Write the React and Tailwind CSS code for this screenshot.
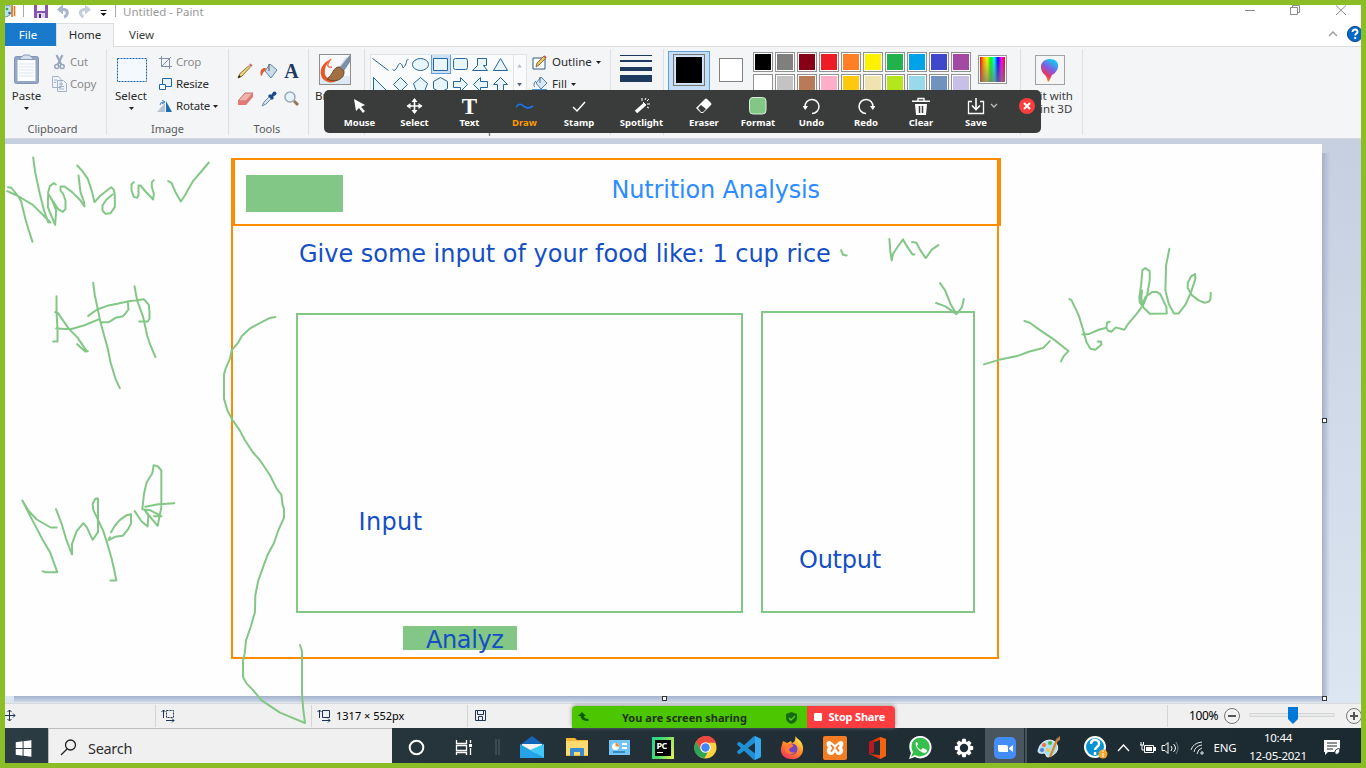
import React from "react";

const Svg = ({ w, h, className = "", children, vb }) => (
  <svg width={w} height={h} viewBox={vb || `0 0 ${w} ${h}`} className={"block shrink-0 " + className} fill="none">{children}</svg>
);

const Down = ({ className = "" }) => (
  <Svg w={5} h={3} className={className}><path d="M0 0h5L2.500 3z" fill="#222" /></Svg>
);

const Group = ({ className, label, labelClass = "", children }) => (
  <div className={"relative flex shrink-0 flex-col border-r border-[#dcdfe3] " + className}>
    <div className="flex h-[74px] w-full">{children}</div>
    {label && <div className={"text-center text-[11px] leading-[13px] text-[#5a5a5a] " + labelClass}>{label}</div>}
  </div>
);

const Row = ({ icon, children, dim }) => (
  <div className={"flex h-[22px] items-center gap-[3px] text-[11.5px] tracking-[-0.2px] whitespace-nowrap " + (dim ? "text-[#8b8b8b]" : "text-[#2b2b2b]")}>
    <div className="flex w-[16px] justify-center">{icon}</div>
    {children}
  </div>
);

function TitleBar() {
  return (
    <div className="flex h-[18px] shrink-0 bg-white text-[12px] text-[#999]">
      <Svg w={112} h={18} vb="5 5 112 18">
        <path d="M4 7c4-4 10 0 8 4-1 4-4 6-8 6z" fill="#b9e2ef" stroke="#6196ad" />
        <circle cx="7" cy="9" r="1.3" fill="#3aa34a" /><circle cx="9.500" cy="13" r="1.300" fill="#2d6bc1" />
        <path d="M12 5v12M14.500 6v10" stroke="#df7c26" strokeWidth="1.700" />
        <path d="M23.500 5v12M115.500 5v12" stroke="#a9a9a9" />
        <path d="M34 5h14v13H34z" fill="#8657ad" /><path d="M37 5h8v6h-8z" fill="#f7f4fa" /><path d="M37 13h8v5h-8z" fill="#dcd6e6" /><path d="M39 14h2v4h-2z" fill="#4c2a7a" />
        <path d="M61 9.500h3.500c4 1 3.500 6-.5 7.500" stroke="#a7b5ce" strokeWidth="3" /><path d="M57 9.500l6-5v10z" fill="#a7b5ce" />
        <path d="M86 9.500h-2c-5 1-4.500 5-.5 7.500" stroke="#c3cddd" strokeWidth="3" /><path d="M91 9.500l-6-5v10z" fill="#c3cddd" />
        <path d="M100.500 10.500h6" stroke="#111" /><path d="M100.500 13h6l-3 3z" fill="#111" />
      </Svg>
      <div className="ml-[6px] mt-[-1px] text-[11.5px] leading-[16px]">Untitled - Paint</div>
      <Svg w={120} h={18} vb="1241 5 120 18" className="ml-auto">
        <path d="M1245 10.500h10M1290.500 7.500h7v7h-7zM1292.500 7v-1.500h7v7h-1.500M1336 5.500l10 9.500M1346 5.500l-10 9.500" stroke="#8c8c8c" />
      </Svg>
    </div>
  );
}

function Tabs() {
  return (
    <div className="flex h-[24px] shrink-0 bg-white text-[11.5px] leading-[24px]">
      <div className="h-[23px] w-[51px] bg-[#1979ca] text-center text-white pr-[5px]">File</div>
      <div className="w-[58px] border-x border-t border-[#dcdddf] bg-[#f4f5f7] text-center text-[#2b2b2b] leading-[22px]">Home</div>
      <div className="flex grow border-b border-[#dadbdc] pl-[15px] text-[#3b3b3b]">
        View
        <Svg w={38} h={24} vb="1323 23 38 24" className="ml-auto">
          <path d="M1329 36l4-4 4 4" stroke="#999" strokeWidth="1.300" />
          <circle cx="1355" cy="34" r="7.600" fill="#0768c4" stroke="#0b4b8c" />
          <path d="M1352.500 32c0-3.500 5.500-3 5 0-.2 1.500-2.300 1.500-2.300 3.500M1355.200 37v2" stroke="#fff" strokeWidth="1.900" />
        </Svg>
      </div>
    </div>
  );
}

const shapes = [
  "M-8-6L8 6", "M-8 5C-4 9-3-2 0-1S1 6 4 2 5-5 8-5", "E", "M-7-6h14v12h-14z", "M-5-6h10q2 0 2 2v7q0 2-2 2h-10q-2 0-2-2v-7q0-2 2-2z", "M-3-6h9v7h-3l4 5h-15l5-5z", "M0-6l7 12h-14z",
  "M-7-7v14h14z", "M0-7l7 7-7 7-7-7z", "M0-7l7 6-3 8h-8l-3-8z", "M0-7l7 4v7l-7 4-7-4v-7z", "M-7-3h7v-4l7 7-7 7v-4h-7z", "M7-3h-7v-4l-7 7 7 7v-4h7z", "M0-7l7 7h-4v8h-6v-8h-4z",
];
const palette = [
  ["#000000", "#ffffff"], ["#7f7f7f", "#c3c3c3"], ["#880015", "#b97a57"], ["#ed1c24", "#ffaec9"], ["#ff7f27", "#ffc90e"],
  ["#fff200", "#efe4b0"], ["#22b14c", "#b5e61d"], ["#00a2e8", "#99d9ea"], ["#3f48cc", "#7092be"], ["#a349a4", "#c8bfe7"],
];

function Ribbon() {
  return (
    <div className="flex h-[92px] shrink-0 border-b border-[#d5d8dc] bg-[#f4f5f7] pt-[2px] pb-[3px]">
      <Group className="w-[102px]" label="Clipboard" labelClass="pr-[6px]">
        <div className="flex w-[43px] flex-col items-center pt-[5px] text-[11.5px] leading-[16px] text-[#2b2b2b]">
          <Svg w={26} h={31} className="ml-px">
            <rect x=".5" y="2.500" width="24" height="27" rx="2" fill="#93a6c6" stroke="#8496b5" />
            <rect x="3.500" y="6" width="18" height="21" fill="#fcfdff" />
            <path d="M5 10h15M5 13h15M5 16h15M5 19h15M5 22h15" stroke="#dce4f0" />
            <path d="M5.500 5.500c1-3 3-2 4-4.500h6c1 2.500 3 1.500 4 4.500z" fill="#d6dfec" stroke="#8798b4" />
          </Svg>
          <div className="mt-[3px] leading-[15px]">Paste</div>
          <Down className="mt-[4px]" />
        </div>
        <div className="flex flex-col pl-[3px] pt-[2px]">
          <Row dim icon={<Svg w={11} h={16}><path d="M2.500 1l5 10M8.500 1l-5 10" stroke="#93a5bf" strokeWidth="2" /><circle cx="2.800" cy="12.500" r="2" stroke="#93a5bf" strokeWidth="1.500" /><circle cx="8.200" cy="12.500" r="2" stroke="#93a5bf" strokeWidth="1.500" /></Svg>}>Cut</Row>
          <Row dim icon={<Svg w={15} h={16}><path d="M.5.500h6l2.500 3v8H.5zM5.500 4.500h6l3 3v8h-9z" fill="#f2f5fb" stroke="#a1b0cb" /><path d="M2 4h3M2 6.500h2M7 8h4M7 10.500h5M7 13h5" stroke="#a1b0cb" /></Svg>}>Copy</Row>
        </div>
      </Group>
      <Group className="w-[122px]" label="Image">
        <div className="flex w-[48px] flex-col items-center pt-[9px] text-[11.5px] leading-[16px] text-[#2b2b2b]">
          <Svg w={30} h={25} className="ml-[2px]"><rect x=".5" y=".5" width="29" height="23" fill="#f4f9fe" stroke="#1664aa" strokeDasharray="2 1" /></Svg>
          <div className="mt-[5px] leading-[15px]">Select</div>
          <Down className="mt-[4px]" />
        </div>
        <div className="flex flex-col pl-[2px] pt-[2px]">
          <Row dim icon={<Svg w={13} h={13}><path d="M2.500 0v10.500H13M0 2.500h10.500V13M2.500 10.500L12 1" stroke="#8092ac" /></Svg>}>Crop</Row>
          <Row icon={<Svg w={13} h={13}><path d="M3.500.5h9v8h-9z" fill="#e9f5fc" stroke="#1c68a8" /><path d="M.5 6.500h6v5h-6z" fill="#fff" stroke="#1c68a8" /></Svg>}>Resize</Row>
          <Row icon={<Svg w={16} h={13}><path d="M8 12H0L8 3z" fill="#b6c3d2" /><path d="M9 12h6L9 1z" fill="#1f6fae" /><path d="M3 5q0-3 4-3M5 0l3 2-3 2" stroke="#2d7fd1" /></Svg>}>Rotate <Down /></Row>
        </div>
      </Group>
      <Group className="w-[80px]" label="Tools" labelClass="pr-[3px]">
        <div className="grid h-[56px] grid-cols-[24px_23px_23px] grid-rows-[28px_28px] place-items-center pl-[4px] mt-[8px]">
          <Svg w={16} h={16}><path d="M1 15l2-4.500 8.500-7.500 1.500 1.500L5 13z" fill="#f4d46a" stroke="#8b7243" /><path d="M12 2l1.500-1.500 2 2L14 4z" fill="#d75d5d" /><path d="M1 15l1-3 2 2z" fill="#222" /></Svg>
          <Svg w={18} h={16}><path d="M5 8l5-7 7 6-6 8z" fill="#c9dcec" stroke="#5e87aa" /><path d="M9 1v7" stroke="#555" /><path d="M6 5C0 4 0 10 1 13c2 0 1-4 4-5z" fill="#e5572c" /></Svg>
          <div className="font-['Liberation_Serif',serif] text-[20px] font-bold leading-[18px] text-[#203a60]">A</div>
          <Svg w={17} h={14}><path d="M1 9l7-8h8l-7 8z" fill="#f2b2ae" stroke="#cd6d69" /><path d="M1 9h8v4H1z" fill="#e77772" /><path d="M9 9l7-8v4l-7 8z" fill="#dc7a76" /></Svg>
          <Svg w={16} h={16}><path d="M1 15l2-4 6-6 2 2-6 6z" fill="#d6e7f4" stroke="#6b87a3" /><path d="M8 4l4 4M10 6l3-3" stroke="#1a4b8b" strokeWidth="3" /><circle cx="13.500" cy="2.500" r="2" fill="#1a4b8b" /></Svg>
          <Svg w={16} h={16}><circle cx="6" cy="6" r="5" fill="#e6f3fd" stroke="#9aa9b8" strokeWidth="1.500" /><path d="M10 10l4 4" stroke="#9a7659" strokeWidth="3" /></Svg>
        </div>
      </Group>
      <Group className="w-[56px]">
        <div className="pl-[6px] pt-[5px] text-[11.5px] leading-[16px] text-[#2b2b2b]">
          <Svg w={35} h={32} className="ml-[4px]"><rect x=".5" y=".5" width="31" height="30" fill="#f7fafc" stroke="#8e8e8e" /><path d="M1 22h30v8H1z" fill="#dceaf4" /><path d="M13 5C2 8-1 19 4 25c5 5 12 4 16 0-6 2-13 0-14-5C5 14 8 8 13 5z" fill="#ea5724" /><path d="M12 5c-4 5-5 9 1 8" stroke="#ef7048" strokeWidth="1.500" /><path d="M31 1L20 13l5 4 6-9z" fill="#7c8ea8" /><path d="M28 3l-7 9" stroke="#d7e0e9" strokeWidth="1.500" /><path d="M20 13c-6 0-6 8-12 12 7 4 18 1 17-8z" fill="#a06f42" stroke="#704c2b" /></Svg>
          <div className="mt-[2px] leading-[15px]">Brushes</div>
        </div>
      </Group>
      <Group className="w-[246px]" label="Shapes">
        <div className="ml-[5px] mt-[5px] flex h-[61px] w-[157px] border border-[#dfe2e6] bg-[#fafbfc]">
          <Svg w={142} h={59} vb="371 55 142 59">
            <rect x="431.500" y="54.500" width="19" height="19" fill="#cce2f8" stroke="#5da0e0" />
            {shapes.map((d, i) => (
              <g key={i} transform={`translate(${380.5 + (i % 7) * 20} ${64.500 + Math.floor(i / 7) * 20})`} stroke="#27659c" fill={i === 0 || i === 1 ? "none" : "#e8f5fb"}>
                {d === "E" ? <ellipse rx="8" ry="6" /> : <path d={d} />}
              </g>
            ))}
          </Svg>
          <Svg w={13} h={59} className="border-l border-[#e1e4e8]"><path d="M3.500 11h5L6 7.500z" fill="#b6bdc8" /><path d="M3.500 28h5L6 31.500z" fill="#4b5d77" /></Svg>
        </div>
        <div className="flex flex-col pl-[5px] pt-[2px]">
          <Row icon={<Svg w={16} h={15}><path d="M1 3h12v11H1z" fill="#fff" stroke="#315983" /><path d="M4 12l1-4 7-7 2 2-7 7z" fill="#edc65c" stroke="#8c6c3f" /><path d="M12 1l2 2" stroke="#d15757" strokeWidth="2" /></Svg>}><span className="ml-px tracking-normal">Outline</span> <Down className="ml-[1px]" /></Row>
          <Row icon={<Svg w={17} h={16}><path d="M4 7l5-6 6 6-6 6z" fill="#d7e7f3" stroke="#557f9f" /><path d="M8 1v6M4 5C1 7 2 11 3 11" stroke="#4a7191" /><path d="M0 13h15v3H0z" fill="#4b95dc" /></Svg>}><span className="ml-px tracking-normal">Fill</span> <Down className="ml-[1px]" /></Row>
        </div>
      </Group>
      <Group className="w-[53px]">
        <div className="flex w-[32px] flex-col ml-[9px] pt-[6px]">
          <div className="h-px bg-[#1f3a5f]" /><div className="mt-[4px] h-[2px] bg-[#1f3a5f]" />
          <div className="mt-[5px] h-[4px] bg-[#1f3a5f]" /><div className="mt-[4px] h-[7px] bg-[#1f3a5f]" />
        </div>
      </Group>
      <Group className="w-[357px]">
        <div className="ml-[4px] mt-[2px] h-[66px] w-[42px] border border-[#5da0e0] bg-[#c5def6] pl-[4px] pt-[2px]">
          <div className="h-[32px] w-[32px] border border-[#787878] p-px"><div className="h-full w-full border border-[#d7e7f7] bg-black" /></div>
        </div>
        <div className="ml-[9px] mt-[9px] h-[24px] w-[24px] border border-[#828282] bg-white" />
        <div className="ml-[10px] mt-[3px] flex gap-[2px]">
          {palette.map((c, i) => (
            <div key={i} className="flex flex-col gap-[2px]">
              {c.map((v) => <div key={v} className="h-[20px] w-[20px] border border-[#929292] bg-white p-px"><div className="h-full w-full" style={{ backgroundColor: v }} /></div>)}
            </div>
          ))}
        </div>
        <div className="ml-[7px] mt-[6px] h-[29px] w-[29px] border border-[#969696] bg-white p-px">
          <div className="h-full w-full bg-[linear-gradient(to_bottom,transparent,#777b),linear-gradient(to_right,red,orange,yellow,lime,cyan,blue,magenta,red)]" />
        </div>
      </Group>
      <Group className="w-[62px]">
        <div className="flex w-full flex-col items-center pr-[4px] pt-[6px] text-center text-[11.5px] leading-[13px] text-[#3b3b3b] whitespace-nowrap">
          <div className="flex h-[30px] w-[30px] items-center justify-center border border-[#a1a1a1] bg-[#f5f5f5]">
            <Svg w={20} h={25}>
              <defs><linearGradient id="p3" x1=".8" y1="0" x2=".3" y2="1"><stop stopColor="#00e0f0" /><stop offset=".45" stopColor="#805ee5" /><stop offset=".75" stopColor="#e23666" /><stop offset="1" stopColor="#ffb700" /></linearGradient></defs>
              <path d="M10 1C-1 1-1 13 5 17c2 2 2 5 3 7 2-1 2-4 4-7C21 12 20 1 10 1z" fill="url(#p3)" />
            </Svg>
          </div>
          <div className="mt-[4px]">Edit with</div><div>Paint 3D</div>
        </div>
      </Group>
    </div>
  );
}

const ink = [
  ["translate(.5 145.5)", "M22 125L32 126L55 155L62 168L75 222L85 255L96 289M20 137L50 150L97 178L150 231M98 36L104 80L118 145L132 200L143 230L150 231M166 117L160 113L148 122L143 140L142 185L164 238L167 195L155 165L145 148L172 190L187 199L195 190L195 165L188 145L180 135L180 123L192 123L215 140L240 165L252 183L250 168L240 140L234 90M230 60L245 76L262 100L275 140L282 170L300 150L332 125L340 133L343 150L343 185L330 203L315 205L306 195L306 180L318 162L336 147M400 110L393 116L393 135L400 154L410 157L414 150L414 120L420 120L435 138L458 162L460 145L454 125L454 110L460 104M503 107L513 112L525 140L541 168L553 150L578 106L605 75L625 51"],
  ["translate(.5 145.5)", "M168 452L168 500L171 550L171 588L158 588M164 500L172 502L205 550L230 575L258 616M230 596L254 618L262 617M167 549L210 551L250 540L298 520M278 412L283 450L300 530L322 610L330 650L345 700L358 728M263 511L290 492L320 481L350 475L385 467L430 461L445 478L447 500L447 520L442 528L416 528M382 470L384 492L368 512L345 517L325 530L302 530M402 422L410 465L428 515L440 570L450 600L465 635"],
  ["translate(210 300.3)", "M196 50L180 53L158 64L135 76L118 86L95 108L85 126L65 150L60 175L47 205L42 222L42 295L52 330L66 357L88 388L105 420L128 455L150 480L180 525L200 565L214 583L218 615L222 625L222 652L205 690L192 728L172 765L145 840L136 885L135 935L122 980L108 1020L104 1060L99 1082L99 1130L110 1150L128 1168L155 1200L210 1237L285 1268L280 1230L276 1180L276 1052L270 1034"],
  ["translate(0 440.5)", "M67 180L95 235L128 298L150 335L172 395L135 395L128 392M67 180L85 210L110 237L152 261L170 261M168 206L185 250L198 295L216 342L216 310L230 272L250 248L260 260L278 298L294 275L294 174L286 175L278 190L280 208L310 272L325 320L335 355L343 390L349 420L331 420M330 290L326 299L345 289L368 286L385 265L393 250L393 221L380 224L360 238L345 255L333 275M404 212L425 243L443 258L445 225L435 210L473 256L484 200L484 90L474 78L461 74L457 98L440 125L432 160L427 206L450 209L484 227L462 227M436 199L475 191L523 188"],
  ["translate(820.4 225.4)", "M62 74L68 88L79 90M207 41L210 80L214 105L218 85L230 67L248 42L258 60L276 87L282 87M275 50L288 52L300 75L316 98L335 72L354 59M359 173L374 195L390 235L408 266M347 233L375 243L408 266L425 245L430 221M491 417L540 402L590 392L625 379L668 368L688 347M612 287L628 292L660 315L700 342L744 377L730 392L722 408"],
  ["translate(820.4 225.4)", "M747 221L753 224L775 270L790 320L798 350L810 370L825 373L843 357L842 349L832 348M786 327L805 326L835 313L858 307M868 289L860 292L858 307L863 316L873 319L886 306L912 313L925 293L945 270L968 240L980 210L988 165L988 137L975 128L966 134L962 180L957 215L958 232L970 247L988 265L1039 264L1038 245L1020 207L1010 200L995 200L975 215L965 240L963 215L965 195M1047 70L1037 120L1035 195L1045 235L1060 264L1075 264L1095 238L1112 200L1125 160L1124 146L1113 152L1102 172L1102 188L1115 210L1135 225L1152 232L1165 229L1170 222L1171 202"],
];

const Note = ({ className, children }) => (
  <div className={"absolute whitespace-nowrap font-['DejaVu_Sans',sans-serif] text-[24px] leading-[30px] " + className}>{children}</div>
);

const Handle = ({ className }) => <div className={"absolute h-[5px] w-[5px] border border-[#333] bg-white " + className} />;

function Workspace() {
  return (
    <div className="relative h-[564px] shrink-0 bg-linear-to-b from-[#c5cfdf] to-[#dce6f2] pt-[5px]">
      <div className="flex">
        <div className="relative h-[552px] w-[1317px] bg-[#fefefe]">
          <div className="absolute left-[226px] top-[14px] h-[501px] w-[768px] border-2 border-[#ff8c00]" />
          <div className="absolute left-[228px] top-[14px] h-[68px] w-[768px] border-2 border-[#ff8c00]" />
          <div className="absolute left-[241px] top-[31px] h-[37px] w-[97px] bg-[#83c786]" />
          <div className="absolute left-[291px] top-[169px] h-[300px] w-[447px] border-2 border-[#83c786]" />
          <div className="absolute left-[756px] top-[167px] h-[302px] w-[214px] border-2 border-[#83c786]" />
          <div className="absolute left-[398px] top-[482px] h-[24px] w-[114px] bg-[#83c786]" />
          <Note className="left-[606.500px] top-[31px] tracking-[-0.18px] text-[#2d8cff]">Nutrition Analysis</Note>
          <Note className="left-[294px] top-[95px] tracking-[-0.02px] text-[#144fc4]">Give some input of your food like: 1 cup rice</Note>
          <Note className="left-[353.500px] top-[363px] tracking-[0.35px] text-[#144fc4]">Input</Note>
          <Note className="left-[794px] top-[401px] tracking-[-0.25px] text-[#144fc4]">Output</Note>
          <Note className="left-[421px] top-[481px] tracking-[-0.4px] text-[#144fc4]">Analyz</Note>
        </div>
        <div className="mt-[9px] w-[8px] bg-linear-to-r from-[#a3b1ca] to-transparent" />
      </div>
      <div className="ml-[9px] h-[6px] w-[1308px] bg-linear-to-b from-[#a3b1ca] to-[#cdd7e6]" />
      <Handle className="left-[1317px] top-[279px]" />
      <Handle className="left-[657px] top-[557px]" />
      <Handle className="left-[1317px] top-[557px]" />
    </div>
  );
}

function StatusBar() {
  return (
    <div className="flex h-[25px] shrink-0 border-t border-[#d8dadd] bg-[#f0f0f0] py-px text-[11px] leading-[24px] text-black">
      <div className="w-[151px] border-r border-[#d4d4d4]"><Svg w={12} h={22}><path d="M-1 10.500h11M4.500 5v11M2.500 7l2-2 2 2M2.500 14l2 2 2-2M8 8.500l2 2-2 2" stroke="#1d3557" /></Svg></div>
      <div className="w-[156px] border-r border-[#d4d4d4] pl-[5px]"><Svg w={16} h={22}><path d="M2.500 5v8M.5 7l2-2 2 2M5 15.500h8M11 13.500l2 2-2 2" stroke="#1d3557" /><path d="M5.500 5.500h7v7h-7z" stroke="#1d3557" strokeDasharray="2 1" /></Svg></div>
      <div className="flex w-[156px] border-r border-[#d4d4d4] pl-[5px]"><Svg w={16} h={22}><path d="M2.500 5v8M.5 7l2-2 2 2M5 15.500h8M11 13.500l2 2-2 2M5.500 5.500h7v7h-7z" stroke="#1d3557" /></Svg><span className="ml-[3px] whitespace-nowrap leading-[22px]">1317 × 552px</span></div>
      <div className="w-[156px] border-r border-[#d4d4d4] pl-[7px]"><Svg w={12} h={22}><path d="M.5 5.500h10v10H.5zM2.500 5.500v4h6v-4M3.500 15.500v-4h4v4" stroke="#1d3557" /></Svg></div>
      <div className="w-[544px] border-r border-[#d4d4d4]" />
      <div className="flex grow items-center pl-[21px] pb-[1px]">
        <span className="w-[28px] whitespace-nowrap tracking-[-0.4px] text-[12px] leading-[22px]">100%</span>
        <Svg w={144} h={23} vb="1217 704 144 23">
          <path d="M1250 713.500h84v3h-84z" fill="#e7eaea" stroke="#d6d6d6" />
          <path d="M1288 707h10v12l-5 5-5-5z" fill="#0078d7" />
          <circle cx="1232" cy="716" r="7.500" fill="#f2f2f2" stroke="#777" /><path d="M1228 716h8" stroke="#555" strokeWidth="2" />
          <circle cx="1354" cy="716" r="7.500" fill="#f2f2f2" stroke="#777" /><path d="M1350 716h8M1354 712v8" stroke="#555" strokeWidth="2" />
        </Svg>
      </div>
    </div>
  );
}

const Cell = ({ children, className = "w-[43px]" }) => <div className={"flex h-full shrink-0 items-center justify-center pt-[4px] " + className}>{children}</div>;

function TaskBar() {
  return (
    <div className="flex h-[35px] shrink-0 bg-linear-to-r from-[#2c3c43] via-[#222f37] to-[#1b2930] text-white">
      <Cell><Svg w={44} h={30} vb="0 0 44 30" className="w-[43px]"><path d="M11 9l7-1v7h-7zM19 8l8-1v8h-8zM11 16h7v7l-7-1zM19 16h8v8l-8-1z" fill="#fff" /></Svg></Cell>
      <div className="flex w-[344px] shrink-0 items-center border-t border-l border-[#bdbdbd] bg-[#f0f0f0] text-[14.5px] text-[#303030]">
        <Svg w={17} h={17} className="ml-[11px] mt-[3px]"><circle cx="10.500" cy="6" r="5" stroke="#222" strokeWidth="1.300" /><path d="M7 10l-6 6" stroke="#222" strokeWidth="1.300" /></Svg>
        <span className="ml-[11px] mt-[5px] tracking-[-0.3px]">Search</span>
      </div>
      <Cell className="w-[48px]"><Svg w={17} h={17}><circle cx="8.500" cy="8.500" r="6.800" stroke="#fff" strokeWidth="2" /></Svg></Cell>
      <Cell className="w-[48px]"><Svg w={18} h={16}><path d="M1.500 0v3.500h10V0M1.500 15v-2.500h10V15M1.500 5.500h10v5h-10zM15.500 0v3M15.500 8v7" stroke="#fff" strokeWidth="1.300" /><path d="M14 4h3v3h-3z" fill="#fff" /></Svg></Cell>
      <Cell className="w-[18px]"><Svg w={5} h={17}><path d="M1 0v16M4 0v16" stroke="#52616a" /></Svg></Cell>
      <div className="ml-[3px] flex">
        <Cell className="w-[46px]"><Svg w={24} h={23}><path d="M0 9L12 0l12 9v13H0z" fill="#1267bb" /><path d="M2 8h20v6l-10 5-10-5z" fill="#f5f5f5" /><path d="M0 8l24 14H0z" fill="#27a2e6" /><path d="M24 8v14L10 14z" fill="#41c8fa" /></Svg></Cell>
        <Cell><Svg w={22} h={19}><path d="M0 0h9l2 2h11v16H0z" fill="#f5b82f" /><path d="M0 3h22v14H0z" fill="#ffda70" /><path d="M4 18v-7q0-1 1-1h12q1 0 1 1v7h-4v-4H8v4z" fill="#398bd2" /></Svg></Cell>
        <Cell><Svg w={21} h={16}><path d="M0 0h21v15H0z" fill="#73c5f7" /><circle cx="6.500" cy="6.500" r="3.500" fill="#fff" /><path d="M6.500 6.500V3a3.500 3.500 0 013.500 3.500z" fill="#f68b24" /><path d="M13 3h5v2h-5zM13 7h5v2h-5z" fill="#fff" /><path d="M4 12h12" stroke="#2373ad" strokeWidth="1.500" /></Svg></Cell>
        <Cell><div className="bg-[linear-gradient(110deg,#22d88f,#53d96b_45%,#eff350)] p-[3px]"><div className="h-[16px] w-[16px] bg-black pl-[2px] text-[9px] font-bold leading-[11px] tracking-[-0.5px]">PC<div className="mt-[1px] h-px w-[6px] bg-white" /></div></div></Cell>
        <Cell><Svg w={23} h={23} vb="0 0 24 24"><circle cx="12" cy="12" r="11.500" fill="#fdd23d" /><path d="M2 6C9-4 20-1 23 7H12L7 14z" fill="#e84b3d" /><path d="M2 6c-5 9 1 17 9 17l5-9-4-7-5 7z" fill="#31a354" /><path d="M2 6l5 8 5-7z" fill="#e84b3d" /><circle cx="12" cy="12" r="5.500" fill="#fff" /><circle cx="12" cy="12" r="4.400" fill="#4287f5" /></Svg></Cell>
        <Cell><Svg w={24} h={24}><path fill="#1f8fd6" d="M23.150 2.587L18.210.21a1.494 1.494 0 0 0-1.705.29l-9.460 8.630-4.120-3.128a.999.999 0 0 0-1.276.057L.327 7.261A1 1 0 0 0 .326 8.740L3.899 12 .326 15.260a1 1 0 0 0 .001 1.479L1.650 17.940a.999.999 0 0 0 1.276.057l4.120-3.128 9.460 8.630a1.492 1.492 0 0 0 1.704.29l4.942-2.377A1.500 1.500 0 0 0 24 20.060V3.939a1.500 1.500 0 0 0-.85-1.352zm-5.146 14.861L10.826 12l7.178-5.448v10.896z" /><path d="M18 .2l5.100 2.400q.9.500.9 1.400v16q0 .9-.9 1.400L18 23.800z" fill="#38a8ee" /></Svg></Cell>
        <Cell><Svg w={24} h={24}><defs><linearGradient id="fox" x1=".8" y1="0" x2=".2" y2="1"><stop stopColor="#fff34f" /><stop offset=".5" stopColor="#ff8b24" /><stop offset="1" stopColor="#f22c65" /></linearGradient></defs><path d="M15 0c2 3 7 4 8 11 1 8-5 13-12 12C4 23 0 18 1 12L3 5l4 2 4-2 1 2c3-1 4-4 3-7z" fill="url(#fox)" /><circle cx="12" cy="13" r="5.500" fill="#7445c2" /><path d="M5 9l6-1c1 0 4 2 1 3l-3 2c0 3 3 4 6 3-1 2-8 4-10-2z" fill="#ff7b34" /></Svg></Cell>
        <Cell><Svg w={24} h={24}><rect width="24" height="24" rx="2" fill="#f47d23" /><path d="M8.500 6C5 3 1.500 7 5 11.500c-3 3.500 0 8 3.500 7.500 2 0 2.500-2 3.500-3 1 1 1.500 3 3.500 3 3.500.5 6.500-4 3.500-7.500C22.500 7 19 3 15.500 6l-3.500 3z" fill="#fff" /><path d="M8 9l2.500 3L8 15.500M16 9l-2.500 3 2.500 3.500" stroke="#f47d23" strokeWidth="1.800" /></Svg></Cell>
        <Cell><Svg w={20} h={24}><path d="M1 6l11-5 6 2v17l-6 3L1 18l11 1V4L6 6v10l-5 2z" fill="#df3907" /><path d="M1 6l5-2v12l-5 2z" fill="#b81724" /><path d="M12 1l6 2v17l-6 3z" fill="#f26410" /></Svg></Cell>
        <Cell><Svg w={23} h={23}><path d="M0 23l2-6C-4 5 7-3 16 1c10 5 8 19-2 21-3 1-6 0-8-1z" fill="#fff" /><path d="M2 21l2-5C-1 6 8-1 16 3c8 5 5 16-3 17-3 1-5 0-7-1z" fill="#36bf4a" /><path d="M7 6c-2 4 4 11 9 11 2-1 2-2 2-3l-4-2-2 2c-2-1-3-2-4-4l1-2-1-2z" fill="#fff" /></Svg></Cell>
        <Cell><Svg w={20} h={20} vb="0 0 24 24"><path d="M10 1h4l1 4 3-2 3 3-2 3 4 1v4l-4 1 2 3-3 3-3-2-1 4h-4l-1-4-3 2-3-3 2-3-4-1v-4l4-1-2-3 3-3 3 2z" fill="#fff" /><circle cx="12" cy="12" r="5" fill="#1f2d35" /></Svg></Cell>
        <Cell className="w-[39px] bg-[#4a565e]"><Svg w={22} h={22}><rect width="22" height="22" rx="5" fill="#448df9" /><path d="M4 8h8q2 0 2 2v5H6q-2 0-2-2zM15 11l4-3v7l-4-3z" fill="#fff" /></Svg></Cell>
        <div className="ml-px w-[2px] bg-[#46525a]" />
        <Cell><Svg w={26} h={24}><path d="M3 12C5 5 15 1 20 7c5 7-2 13-8 14-3 0-1-4-4-4-6 1-7-1-5-5z" fill="#a9dff1" stroke="#e8f7fc" /><circle cx="8" cy="9" r="2" fill="#ef7140" /><circle cx="14" cy="7" r="2" fill="#55b346" /><circle cx="6" cy="14" r="2" fill="#4b80dc" /><circle cx="12" cy="14" r="2" fill="#f5c544" /><path d="M21 4l-7 17" stroke="#d98628" strokeWidth="2.200" /><path d="M20 3l4-3v4l-3 2z" fill="#b9794a" /></Svg></Cell>
      </div>
      <Cell className="ml-[13px] w-[26px]"><Svg w={24} h={24}><circle cx="11" cy="11" r="10" fill="#0793d2" stroke="#fff" strokeWidth="2" /><path d="M7 8c0-6 9-5 8 0 0 3-4 3-4 6M11 16v3" stroke="#fff" strokeWidth="2.500" /><circle cx="19" cy="18" r="4.500" fill="#f0a72c" /><path d="M19 17v4M19 14.500v1.500" stroke="#fff" /></Svg></Cell>
      <Cell className="ml-[1px] w-[26px]"><Svg w={13} h={8}><path d="M1 7l5.500-6L12 7" stroke="#fff" strokeWidth="1.400" /></Svg></Cell>
      <Cell className="w-[22px]"><Svg w={17} h={12}><path d="M5.500 3.500h9v7h-9zM1 3h4M2 0v3M4.500 0v3M3 3v5h2" stroke="#fff" /><path d="M7 5h6v4H7zM15 5h2v4h-2z" fill="#fff" /></Svg></Cell>
      <Cell className="ml-px w-[22px]"><Svg w={18} h={14}><path d="M1 4.500h3l3-3v11l-3-3H1zM10 5q2 2 0 5M12.500 3q4 4 0 8" stroke="#fff" /><path d="M15 1q4 6 0 12" stroke="#73818a" /></Svg></Cell>
      <Cell className="ml-[4px] w-[24px]"><Svg w={14} h={14}><path d="M1 9Q3 2 12 1M4 11Q5 5 12 4M7 13Q8 8 12 7M11 11h2v2h-2z" stroke="#e2e5e7" /></Svg></Cell>
      <Cell className="w-[32px]"><span className="text-[11.5px] tracking-[-0.2px]">ENG</span></Cell>
      <div className="ml-px flex w-[72px] flex-col items-center whitespace-nowrap pt-[1px] text-[11.500px] leading-[18px] tracking-[-0.25px]"><span>10:44</span><span>12-05-2021</span></div>
      <Cell className="w-[38px]"><Svg w={18} h={17}><path d="M0 1h16v12H4l-3 3v-3H0z" fill="#fff" /><path d="M3 4h10M3 7h10M3 10h6" stroke="#1b2930" /><path d="M11 15c-1-5 4-6 5-5-1 3 0 6-5 5z" fill="#fff" stroke="#1b2930" /></Svg></Cell>
    </div>
  );
}

const tools = [
  ["Mouse", "w-[55px]", <path d="M3 2l2 12 3-3 4 5 2-2-4-4 4-2z" fill="#fff" />],
  ["Select", "w-[55px]", <><path d="M8.500 2v14M1.500 9h14" stroke="#fff" strokeWidth="1.600" /><path d="M8.500 1l3 4h-6zM8.500 17l3-4h-6zM.5 9l4-3v6zM16.500 9l-4-3v6z" fill="#fff" /></>],
  ["Text", "w-[55px]", null],
  ["Draw", "w-[55px]", <path d="M0 10C4 5 6 8 9 10s5 1 8-1" stroke="#1677f2" strokeWidth="1.600" />],
  ["Stamp", "w-[54px]", <path d="M3 10l4 4 8-9" stroke="#fff" strokeWidth="1.500" />],
  ["Spotlight", "w-[71px]", <><path d="M3 15l9-8" stroke="#fff" strokeWidth="3.600" /><path d="M10 5l3 3M9 4V1M12 3l1-2M14 4l2-2M14 7h3M14 10l2 1" stroke="#fff" /></>],
  ["Eraser", "w-[54px]", <><path d="M1 11l9-9q1-1 2 0l4 4q1 1 0 2l-8 8H6z" fill="#fff" /><path d="M3 11l3-3 5 4-3 3H6z" fill="#3a3c3b" /></>],
  ["Format", "w-[54px]", <rect x=".5" y=".5" width="16.500" height="16.500" rx="3.500" fill="#83c786" stroke="#d9eeda" />],
  ["Undo", "w-[53px]", <><path d="M2 10a7 7 0 117 6.500" stroke="#fff" strokeWidth="1.500" /><path d="M-.5 9H5l-2.700 4z" fill="#fff" /></>],
  ["Redo", "w-[56px]", <><path d="M16 10a7 7 0 10-7 6.500" stroke="#fff" strokeWidth="1.500" /><path d="M13 9h5.500l-2.700 4z" fill="#fff" /></>],
  ["Clear", "w-[54px]", <><path d="M0 3.500h18v1.500H0zM3 7h12l-1 11H4z" fill="#fff" /><path d="M6 4V1.500h6V4" stroke="#fff" strokeWidth="1.400" /><path d="M7.500 9v7M10.500 9v7" stroke="#3a3c3b" strokeWidth="1.500" /></>],
  ["Save", "w-[56px]", <><path d="M5 4.500H1.500v12h15v-12H13" stroke="#fff" strokeWidth="1.300" /><path d="M9 1v11M5 8.500l4 4 4-4" stroke="#fff" strokeWidth="1.600" /></>],
];

function Annotator() {
  return (
    <div className="absolute left-[324px] top-[90px] flex h-[43px] w-[717px] rounded-[5px] bg-[#3a3c3b] pl-[8px]">
      {tools.map(([name, w, icon]) => (
        <div key={name} className={"flex shrink-0 flex-col items-center pt-[7px] text-[9.5px] font-bold leading-[13px] " + w + (name === "Draw" ? " text-[#ff9a00]" : " text-white")}>
          {icon ? <Svg w={18} h={19}>{icon}</Svg> : <div className="h-[19px] font-['Liberation_Serif',serif] text-[23px] leading-[19px]">T</div>}
          <span className="mt-px leading-[12px]">{name}</span>
        </div>
      ))}
      <Svg w={8} h={6} className="-ml-[14px] mt-[13px]"><path d="M1 1l3 3 3-3" stroke="#bbb" strokeWidth="1.300" /></Svg>
      <Svg w={16} h={16} className="ml-[21px] mt-[8px]"><circle cx="8" cy="8" r="8" fill="#fa3e3e" /><path d="M5 5l6 6M11 5l-6 6" stroke="#fff" strokeWidth="2" /></Svg>
    </div>
  );
}

function ShareBar() {
  return (
    <div className="absolute left-[572px] top-[706px] flex h-[22px] w-[323px] overflow-hidden rounded-t-[4px] text-[11px] font-bold leading-[23px] shadow-[0_-1px_4px_#999]">
      <div className="flex w-[235px] bg-[#4cc600] text-[#20331b]">
        <Svg w={12} h={12} className="ml-[6px] mt-[6px]"><path d="M4 0L0 4h2.500q0 5 8 5V7Q6 7 6 4h2z" fill="#0c5c00" /></Svg>
        <span className="ml-[32px] w-[136px] whitespace-nowrap tracking-[0.02px]">You are screen sharing</span>
        <Svg w={12} h={13} className="ml-[28px] mt-[6px]"><path d="M5.500 0L11 2v4q0 4-5.500 6Q0 10 0 6V2z" fill="#176a0c" /><path d="M3 6l2 2 4-4" stroke="#5ad126" strokeWidth="1.300" /></Svg>
      </div>
      <div className="flex w-[88px] bg-[#fb3d40] text-white"><div className="ml-[7px] mt-[7px] h-[8px] w-[8px] rounded-[1px] bg-white" /><span className="ml-[6.500px] whitespace-nowrap leading-[22px] tracking-[-0.2px]">Stop Share</span></div>
    </div>
  );
}

export default function App() {
  return (
    <div className="relative flex h-[768px] w-[1366px] flex-col overflow-hidden border-[5px] border-[#8bbd26] font-['Noto_Sans','Open_Sans',sans-serif]">
      <TitleBar />
      <Tabs />
      <Ribbon />
      <Workspace />
      <StatusBar />
      <TaskBar />
      <div className="absolute -left-[5px] -top-[5px] h-[768px] w-[1366px]">
        <Annotator />
        <ShareBar />
        <svg className="absolute inset-0" width="1366" height="768" fill="none" stroke="#83c786" strokeWidth="6" strokeLinecap="round" strokeLinejoin="round">
          {ink.map(([t, d], i) => <path key={i} transform={t + " scale(.333333)"} d={d} />)}
        </svg>
      </div>
    </div>
  );
}
